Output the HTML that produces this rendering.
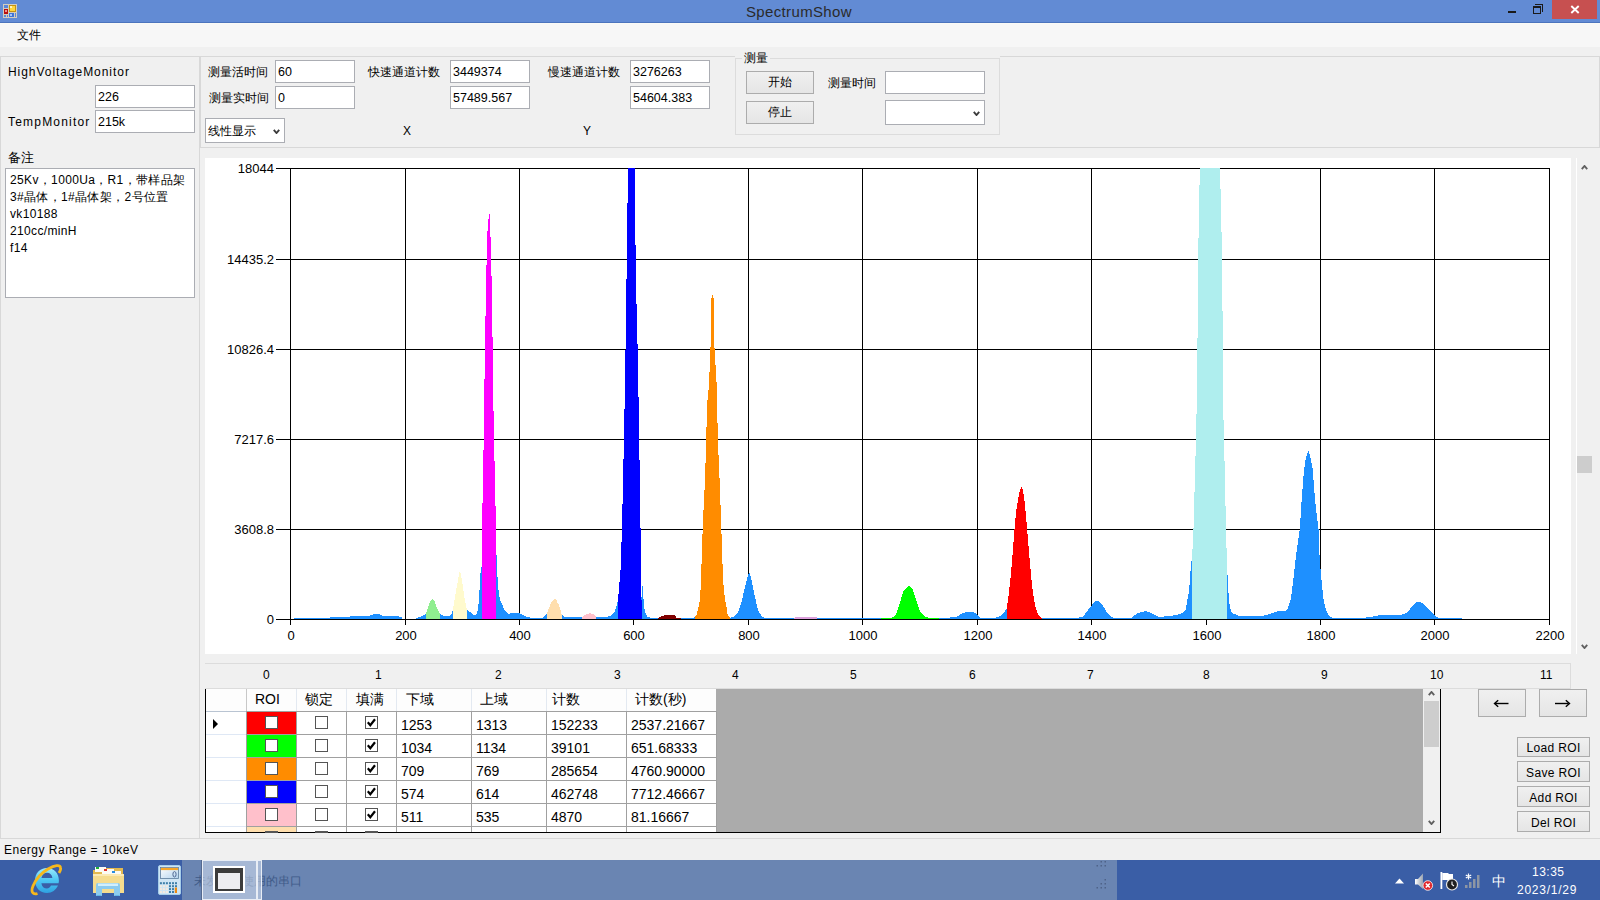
<!DOCTYPE html>
<html><head><meta charset="utf-8"><title>SpectrumShow</title>
<style>
*{box-sizing:border-box;margin:0;padding:0}
html,body{width:1600px;height:900px;overflow:hidden;background:#f0f0f0;font-family:"Liberation Sans",sans-serif;font-size:12px;color:#000;position:relative}
.a{position:absolute}
.l{position:absolute;white-space:nowrap;font-size:12px;line-height:14px}
.tb{position:absolute;background:#fff;border:1px solid #abadb3;height:23px;padding-left:2px;font-size:12.5px;line-height:23px;white-space:nowrap;overflow:hidden}
.btn{position:absolute;border:1px solid #acacac;background:linear-gradient(#f0f0f0,#e5e5e5);text-align:center;white-space:nowrap;font-size:12px}
.cb{position:absolute;background:#fff;border:1px solid #abadb3}
.chev{position:absolute;width:7px;height:7px;border-right:2px solid #444;border-bottom:2px solid #444;transform:rotate(45deg)}
.hn{position:absolute;top:668px;font-size:12px;line-height:14px;white-space:nowrap}
.gc{position:absolute;font-size:14px;line-height:16px;white-space:nowrap}
.ck{position:absolute;width:13px;height:13px;background:#fff;border:1px solid #555}
</style></head><body>

<!-- title bar -->
<div class="a" style="left:0;top:0;width:1600px;height:22px;background:#628bd4"></div>
<div class="a" style="left:0;top:22px;width:1600px;height:1px;background:#4c74bd"></div>
<svg class="a" style="left:3px;top:4px" width="14" height="14" viewBox="0 0 14 14" shape-rendering="crispEdges">
<rect x="0" y="0" width="14" height="14" fill="#d4cdbf"/>
<rect x="1" y="1" width="4" height="3" fill="#5a87d8"/>
<rect x="1" y="5" width="4" height="5" fill="#b81010"/><rect x="2" y="6" width="2" height="2" fill="#f09090"/>
<rect x="6" y="1" width="7" height="7" fill="#c39312"/><rect x="7" y="2" width="5" height="5" fill="#ffd640"/><rect x="7" y="2" width="2" height="2" fill="#fff3c0"/>
<rect x="6" y="9" width="5" height="4" fill="#3f74d8"/><rect x="7" y="10" width="2" height="2" fill="#a8c6fa"/>
<rect x="1" y="11" width="2" height="2" fill="#5a87d8"/><rect x="4" y="11" width="1" height="2" fill="#5a87d8"/>
<rect x="12" y="9" width="1" height="4" fill="#5a87d8"/>
</svg>
<div class="l" style="left:746px;top:3px;font-size:15px;line-height:17px;letter-spacing:0.35px;color:#2a2a2a">SpectrumShow</div>
<div class="a" style="left:1508px;top:11px;width:8px;height:2px;background:#1a1a1a"></div>
<div class="a" style="left:1535px;top:4px;width:8px;height:8px;border-top:1px solid #1a1a1a;border-right:1px solid #1a1a1a"></div>
<div class="a" style="left:1533px;top:6px;width:8px;height:8px;border:1px solid #1a1a1a;border-top-width:2px"></div>
<div class="a" style="left:1552px;top:0;width:45px;height:19px;background:#c75050"></div>
<svg class="a" style="left:1570px;top:5px" width="10" height="9" viewBox="0 0 10 9"><path d="M1.3 1 L8.7 8 M8.7 1 L1.3 8" stroke="#fff" stroke-width="1.9"/></svg>

<!-- menu bar -->
<div class="a" style="left:0;top:23px;width:1600px;height:24px;background:#f7f7f7"></div>
<div class="a" style="left:0;top:23px;width:1600px;height:1px;background:#fbfaf5"></div>
<div class="l" style="left:17px;top:28px;font-size:12px">文件</div>

<!-- left panel -->
<div class="a" style="left:0;top:56px;width:200px;height:783px;border:1px solid #d8d8d8"></div>
<div class="l" style="left:8px;top:65px;letter-spacing:0.95px">HighVoltageMonitor</div>
<div class="tb" style="left:95px;top:85px;width:100px">226</div>
<div class="l" style="left:8px;top:115px;letter-spacing:1.2px">TempMonitor</div>
<div class="tb" style="left:95px;top:110px;width:100px">215k</div>
<div class="l" style="left:8px;top:151px;font-size:13px">备注</div>
<div class="a" style="left:5px;top:168px;width:190px;height:130px;background:#fff;border:1px solid #abadb3"></div>
<div class="l" style="left:10px;top:172px;line-height:17px;letter-spacing:0.35px;white-space:pre">25Kv，1000Ua，R1，带样品架
3#晶体，1#晶体架，2号位置
vk10188
210cc/minH
f14</div>

<!-- top panel -->
<div class="a" style="left:200px;top:56px;width:1400px;height:92px;border:1px solid #d8d8d8"></div>
<div class="l" style="left:208px;top:65px">测量活时间</div>
<div class="tb" style="left:275px;top:60px;width:80px">60</div>
<div class="l" style="left:209px;top:91px">测量实时间</div>
<div class="tb" style="left:275px;top:86px;width:80px">0</div>
<div class="cb" style="left:205px;top:118px;width:80px;height:25px"></div>
<div class="l" style="left:208px;top:124px">线性显示</div>
<svg class="a" style="left:273px;top:128.5px" width="7" height="5" viewBox="0 0 7 5"><path d="M0.8 0.8 L3.5 4 L6.2 0.8" stroke="#3c3c3c" stroke-width="1.9" fill="none"/></svg>

<div class="l" style="left:368px;top:65px">快速通道计数</div>
<div class="tb" style="left:450px;top:60px;width:80px">3449374</div>
<div class="tb" style="left:450px;top:86px;width:80px">57489.567</div>
<div class="l" style="left:403px;top:124px">X</div>

<div class="l" style="left:548px;top:65px">慢速通道计数</div>
<div class="tb" style="left:630px;top:60px;width:80px">3276263</div>
<div class="tb" style="left:630px;top:86px;width:80px">54604.383</div>
<div class="l" style="left:583px;top:124px">Y</div>

<div class="a" style="left:735px;top:56px;width:265px;height:2px;background:#f0f0f0"></div>
<div class="a" style="left:735px;top:58px;width:265px;height:77px;border:1px solid #dcdcdc;background:#f0f0f0"></div>
<div class="l" style="left:742px;top:51px;background:#f0f0f0;padding:0 2px">测量</div>
<div class="btn" style="left:746px;top:71px;width:68px;height:23px;line-height:21px">开始</div>
<div class="btn" style="left:746px;top:101px;width:68px;height:23px;line-height:21px">停止</div>
<div class="l" style="left:828px;top:76px">测量时间</div>
<div class="cb" style="left:885px;top:71px;width:100px;height:23px"></div>
<div class="cb" style="left:885px;top:100px;width:100px;height:25px"></div>
<svg class="a" style="left:973px;top:110.5px" width="7" height="5" viewBox="0 0 7 5"><path d="M0.8 0.8 L3.5 4 L6.2 0.8" stroke="#3c3c3c" stroke-width="1.9" fill="none"/></svg>

<!-- chart -->
<svg class="a" style="left:0;top:0" width="1600" height="900" viewBox="0 0 1600 900" shape-rendering="crispEdges">
<rect x="205" y="158" width="1366" height="496" fill="#fff"/>
<rect x="405" y="168" width="1" height="451" fill="#000"/>
<rect x="519" y="168" width="1" height="451" fill="#000"/>
<rect x="633" y="168" width="1" height="451" fill="#000"/>
<rect x="748" y="168" width="1" height="451" fill="#000"/>
<rect x="862" y="168" width="1" height="451" fill="#000"/>
<rect x="977" y="168" width="1" height="451" fill="#000"/>
<rect x="1091" y="168" width="1" height="451" fill="#000"/>
<rect x="1206" y="168" width="1" height="451" fill="#000"/>
<rect x="1320" y="168" width="1" height="451" fill="#000"/>
<rect x="1434" y="168" width="1" height="451" fill="#000"/>
<rect x="290" y="259" width="1259" height="1" fill="#000"/>
<rect x="290" y="349" width="1259" height="1" fill="#000"/>
<rect x="290" y="439" width="1259" height="1" fill="#000"/>
<rect x="290" y="529" width="1259" height="1" fill="#000"/>
<rect x="290" y="168" width="1260" height="1" fill="#000"/>
<rect x="1549" y="168" width="1" height="451" fill="#000"/>
<polygon fill="#1E90FF" points="294,619 294,618 330,617.5 350,616.5 365,616 370,615.5 375,614 380,614.5 383,616 395,616 402,617 402,619"/>
<polygon fill="#1E90FF" points="416,619 416,618 420,617 424,615 426,613 428,608 430,602 432.5,598.5 435,602 437,608 440,614 443,615.5 449,616 452,613 453,609 455,597 458,580 460,570 462,580 464,595 466,605 467,610 470,612 474,615 477,614 478,608 479,600 480,580 481,567 481.9,567 482,527 483,480 484,420 485,340 486,292 487,239 488,224 489,214 490,214 491,258 492,292 493,380 494,440 495,480 496,530 496.1,543 497,570 498.6,591 500,600 502,604 504,609 506,612 508,614 510,613.5 514,613 519,613 523,615 527,617 530,617.5 543,617.5 545,615.5 547,613 549,608 551,603 553,600 555,599 557,601 558,604 559,605 561,612 562,615 563,616 565,617 572,616.5 580,617 582,617.5 585,615 590,613.3 594,614.5 596,617 600,617.5 605,617 610,616 613,614 615,611 617,605 618.2,598 620.5,570 622,528 623,480 624,438 625,380 626,320 627,240 628,168 634.7,168 635,204 636,285 637.3,334 638.3,380 639,438 640,480 640.5,528 641,570 641.5,600 641.6,576 643,592 644,606 645,612 647,616.5 650,617.5 658,618 660,617 664,615.5 670,615 675,615.5 676,617.5 681,618 693,618 695,616 697,614 698.2,608 700,600 701,580 702,548 703,520 704.5,490 706,450 707,405 709,385 710.5,348 711,300 712.7,294 714,300 714.5,348 716.7,385 717,405 718.3,450 720,490 721,520 722,548 723,580 725,600 726.7,608 727.5,614 730,618 735,616 738,612 740,607 742,600 744,591 746,583 748,575 749.5,573 751,578 753,587 755,597 757,606 759,612 762,616.5 765,618 794,618 795,617 816,617 817,618 881,618 891,618 893,617 895,615.5 897,612 899,606 901,599 903,592 905,589 907,587 909,586 911,587 913,590 915,596 916.5,601 918,606 920,611 922,614 925,616.5 928,617.5 939,618 950,617.5 955,617 958,616 960,614.5 963,613 966,612 972,612 975,613 977,614.5 979,616 980,617.5 995,618 997,617 1000,616 1003,614 1005,611 1006.7,609 1008,600 1010,583 1012,562 1014,535 1016,512 1018,500 1020,490 1021.5,486.5 1023,490 1025,505 1027,528 1029,552 1031,575 1033,593 1035,605 1037,612 1040,617 1041.6,618 1075,618 1082,617 1085,614 1088,610 1092,605 1095,601 1098,601 1102,604 1105,609 1108,614 1112,617 1114,618 1131,618 1135,615 1138,613 1141,612 1146,611 1150,612.5 1155,615 1158,616.5 1164,616.5 1170,616 1175,615 1180,614 1184,612 1186,609 1187,601 1189,592 1190,578 1191,564 1191.7,560 1192,560 1193.5,528 1196,438 1197,390 1197.9,300 1198.7,220 1199.9,168 1219.9,168 1221,205 1221.9,253 1222.7,328 1223,400 1224,438 1226,528 1226.9,563 1228,585 1229,600 1230,608 1232,613 1238,615.5 1250,616.5 1262,616 1270,614 1275,612 1280,610.5 1285,611 1288,608 1291,598 1293,582 1296,556 1299.8,529 1302,495 1304,470 1306,457 1308.4,451 1310,455 1312.8,470 1315,500 1318.6,530 1319.7,560 1322,585 1323.6,600 1326,610 1329,616 1333,618 1361,618 1371,617 1378,615.5 1385,615 1400,615 1406,613 1410,609 1415,603 1419,601.5 1422,603 1426,606 1430,611 1433,614 1437,617 1438,618 1462,618 1462,619"/>
<polygon fill="#90EE90" points="426,619 426,613 428,608 430,602 432.5,598.5 435,602 437,608 440,614 440,619"/>
<polygon fill="#FFFACD" points="453,619 453,609 455,597 458,580 460,570 462,580 464,595 466,605 467,610 467,619"/>
<polygon fill="#FF00FF" points="482,619 482,527 483,480 484,420 485,340 486,292 487,239 488,224 489,214 490,214 491,258 492,292 493,380 494,440 495,480 496,530 496,619"/>
<polygon fill="#FFDEAD" points="547,619 547,613 549,608 551,603 553,600 555,599 557,601 558,604 559,605 561,612 562,615 562,619"/>
<polygon fill="#FFC0CB" points="582,619 582,617.5 585,615 590,613.3 594,614.5 596,617 596,619"/>
<polygon fill="#0000FF" points="618.2,619 618.2,598 620.5,570 622,528 623,480 624,438 625,380 626,320 627,240 628,168 634.7,168 635,204 636,285 637.3,334 638.3,380 639,438 640,480 640.5,528 641,570 641.5,600 641.5,619"/>
<polygon fill="#800000" points="658,619 658,618 660,617 664,615.5 670,615 675,615.5 676,617.5 681,618 681,619"/>
<polygon fill="#FF8C00" points="695,619 695,616 697,614 698.2,608 700,600 701,580 702,548 703,520 704.5,490 706,450 707,405 709,385 710.5,348 711,300 712.7,294 714,300 714.5,348 716.7,385 717,405 718.3,450 720,490 721,520 722,548 723,580 725,600 726.7,608 727.5,614 730,618 730,619"/>
<polygon fill="#DDA0DD" points="794,619 794,618 795,617 816,617 817,618 817,619"/>
<polygon fill="#00FF00" points="881,619 881,618 891,618 893,617 895,615.5 897,612 899,606 901,599 903,592 905,589 907,587 909,586 911,587 913,590 915,596 916.5,601 918,606 920,611 922,614 925,616.5 928,617.5 939,618 939,619"/>
<polygon fill="#FF0000" points="1006.7,619 1006.7,609 1008,600 1010,583 1012,562 1014,535 1016,512 1018,500 1020,490 1021.5,486.5 1023,490 1025,505 1027,528 1029,552 1031,575 1033,593 1035,605 1037,612 1040,617 1041.6,618 1041.6,619"/>
<polygon fill="#AFEEEE" points="1191.7,619 1191.7,560 1192,560 1193.5,528 1196,438 1197,390 1197.9,300 1198.7,220 1199.9,168 1219.9,168 1221,205 1221.9,253 1222.7,328 1223,400 1224,438 1226,528 1226.9,563 1226.9,619"/>
<rect x="290" y="168" width="1" height="457" fill="#000"/>
<rect x="276" y="619" width="1274" height="1" fill="#000"/>
<rect x="276" y="168" width="14" height="1" fill="#000"/>
<rect x="276" y="259" width="14" height="1" fill="#000"/>
<rect x="276" y="349" width="14" height="1" fill="#000"/>
<rect x="276" y="439" width="14" height="1" fill="#000"/>
<rect x="276" y="529" width="14" height="1" fill="#000"/>
<rect x="405" y="619" width="1" height="6" fill="#000"/>
<rect x="519" y="619" width="1" height="6" fill="#000"/>
<rect x="633" y="619" width="1" height="6" fill="#000"/>
<rect x="748" y="619" width="1" height="6" fill="#000"/>
<rect x="862" y="619" width="1" height="6" fill="#000"/>
<rect x="977" y="619" width="1" height="6" fill="#000"/>
<rect x="1091" y="619" width="1" height="6" fill="#000"/>
<rect x="1206" y="619" width="1" height="6" fill="#000"/>
<rect x="1320" y="619" width="1" height="6" fill="#000"/>
<rect x="1434" y="619" width="1" height="6" fill="#000"/>
<rect x="1549" y="619" width="1" height="6" fill="#000"/>
<g font-family="Liberation Sans, sans-serif" font-size="13" fill="#000" shape-rendering="auto"><text x="274" y="172.6" text-anchor="end">18044</text>
<text x="274" y="263.6" text-anchor="end">14435.2</text>
<text x="274" y="353.6" text-anchor="end">10826.4</text>
<text x="274" y="443.6" text-anchor="end">7217.6</text>
<text x="274" y="533.6" text-anchor="end">3608.8</text>
<text x="274" y="623.6" text-anchor="end">0</text>
<text x="291" y="640" text-anchor="middle">0</text>
<text x="406" y="640" text-anchor="middle">200</text>
<text x="520" y="640" text-anchor="middle">400</text>
<text x="634" y="640" text-anchor="middle">600</text>
<text x="749" y="640" text-anchor="middle">800</text>
<text x="863" y="640" text-anchor="middle">1000</text>
<text x="978" y="640" text-anchor="middle">1200</text>
<text x="1092" y="640" text-anchor="middle">1400</text>
<text x="1207" y="640" text-anchor="middle">1600</text>
<text x="1321" y="640" text-anchor="middle">1800</text>
<text x="1435" y="640" text-anchor="middle">2000</text>
<text x="1550" y="640" text-anchor="middle">2200</text></g>
</svg>
<div class="a" style="left:1576px;top:158px;width:1px;height:496px;background:#fff"></div>
<svg class="a" style="left:1581px;top:164.5px" width="7" height="5" viewBox="0 0 7 5"><path d="M0.8 4.2 L3.5 1 L6.2 4.2" stroke="#606060" stroke-width="1.9" fill="none"/></svg>
<svg class="a" style="left:1581px;top:643.5px" width="7" height="5" viewBox="0 0 7 5"><path d="M0.8 0.8 L3.5 4 L6.2 0.8" stroke="#606060" stroke-width="1.9" fill="none"/></svg>
<div class="a" style="left:1577px;top:456px;width:15px;height:17px;background:#cdcdcd"></div>

<!-- header row numbers -->
<div class="a" style="left:205px;top:663px;width:1366px;height:26px;border-top:1px solid #dcdcdc;border-right:1px solid #dcdcdc"></div>
<div class="hn" style="left:263px">0</div>
<div class="hn" style="left:375px">1</div>
<div class="hn" style="left:495px">2</div>
<div class="hn" style="left:614px">3</div>
<div class="hn" style="left:732px">4</div>
<div class="hn" style="left:850px">5</div>
<div class="hn" style="left:969px">6</div>
<div class="hn" style="left:1087px">7</div>
<div class="hn" style="left:1203px">8</div>
<div class="hn" style="left:1321px">9</div>
<div class="hn" style="left:1430px">10</div>
<div class="hn" style="left:1540px">11</div>

<!-- data grid -->
<div class="a" style="left:205px;top:688px;width:1366px;height:1px;background:#dcdcdc"></div>
<div class="a" style="left:205px;top:689px;width:1236px;height:144px;background:#ababab;border-left:1px solid #000;border-right:1px solid #000;border-bottom:1px solid #000"></div>
<div class="a" style="left:206px;top:689px;width:510px;height:143px;background:#fff"></div>
<div class="a" style="left:206px;top:689px;width:510px;height:22px;background:#fdfdfd"></div>
<div class="a" style="left:246px;top:689px;width:1px;height:22px;background:#e3e9f1"></div>
<div class="a" style="left:296px;top:689px;width:1px;height:22px;background:#e3e9f1"></div>
<div class="a" style="left:346px;top:689px;width:1px;height:22px;background:#e3e9f1"></div>
<div class="a" style="left:396px;top:689px;width:1px;height:22px;background:#e3e9f1"></div>
<div class="a" style="left:471px;top:689px;width:1px;height:22px;background:#e3e9f1"></div>
<div class="a" style="left:546px;top:689px;width:1px;height:22px;background:#e3e9f1"></div>
<div class="a" style="left:626px;top:689px;width:1px;height:22px;background:#e3e9f1"></div>
<div class="a" style="left:246px;top:689px;width:1px;height:22px;background:#c8c8c8"></div>
<div class="a" style="left:246px;top:711px;width:470px;height:1px;background:#a0a0a0"></div>
<div class="a" style="left:206px;top:711px;width:40px;height:1px;background:#dfe8f5"></div>
<div class="a" style="left:246px;top:734px;width:470px;height:1px;background:#a0a0a0"></div>
<div class="a" style="left:206px;top:734px;width:40px;height:1px;background:#dfe8f5"></div>
<div class="a" style="left:246px;top:757px;width:470px;height:1px;background:#a0a0a0"></div>
<div class="a" style="left:206px;top:757px;width:40px;height:1px;background:#dfe8f5"></div>
<div class="a" style="left:246px;top:780px;width:470px;height:1px;background:#a0a0a0"></div>
<div class="a" style="left:206px;top:780px;width:40px;height:1px;background:#dfe8f5"></div>
<div class="a" style="left:246px;top:803px;width:470px;height:1px;background:#a0a0a0"></div>
<div class="a" style="left:206px;top:803px;width:40px;height:1px;background:#dfe8f5"></div>
<div class="a" style="left:246px;top:826px;width:470px;height:1px;background:#a0a0a0"></div>
<div class="a" style="left:206px;top:826px;width:40px;height:1px;background:#dfe8f5"></div>
<div class="a" style="left:206px;top:711px;width:40px;height:1px;background:#b9c4d2"></div>
<div class="a" style="left:246px;top:711px;width:1px;height:121px;background:#a0a0a0"></div>
<div class="a" style="left:296px;top:711px;width:1px;height:121px;background:#a0a0a0"></div>
<div class="a" style="left:346px;top:711px;width:1px;height:121px;background:#a0a0a0"></div>
<div class="a" style="left:396px;top:711px;width:1px;height:121px;background:#a0a0a0"></div>
<div class="a" style="left:471px;top:711px;width:1px;height:121px;background:#a0a0a0"></div>
<div class="a" style="left:546px;top:711px;width:1px;height:121px;background:#a0a0a0"></div>
<div class="a" style="left:626px;top:711px;width:1px;height:121px;background:#a0a0a0"></div>
<div class="a" style="left:716px;top:711px;width:1px;height:121px;background:#a0a0a0"></div>
<div class="a" style="left:247px;top:712px;width:49px;height:22px;background:#ff0000"></div>
<div class="a" style="left:247px;top:735px;width:49px;height:22px;background:#00ff00"></div>
<div class="a" style="left:247px;top:758px;width:49px;height:22px;background:#ff8c00"></div>
<div class="a" style="left:247px;top:781px;width:49px;height:22px;background:#0000ff"></div>
<div class="a" style="left:247px;top:804px;width:49px;height:22px;background:#ffc0cb"></div>
<div class="a" style="left:247px;top:827px;width:49px;height:5px;background:#ffdead"></div>
<div class="ck" style="left:265px;top:716px;height:13px"></div>
<div class="ck" style="left:315px;top:716px;height:13px"></div>
<div class="ck" style="left:365px;top:716px;height:13px"></div>
<svg class="a" style="left:365px;top:716px" width="13" height="13" viewBox="0 0 13 13"><path d="M2.8 6.3 L5.3 9.2 L10 3.3" fill="none" stroke="#000" stroke-width="2.2"/></svg>
<div class="ck" style="left:265px;top:739px;height:13px"></div>
<div class="ck" style="left:315px;top:739px;height:13px"></div>
<div class="ck" style="left:365px;top:739px;height:13px"></div>
<svg class="a" style="left:365px;top:739px" width="13" height="13" viewBox="0 0 13 13"><path d="M2.8 6.3 L5.3 9.2 L10 3.3" fill="none" stroke="#000" stroke-width="2.2"/></svg>
<div class="ck" style="left:265px;top:762px;height:13px"></div>
<div class="ck" style="left:315px;top:762px;height:13px"></div>
<div class="ck" style="left:365px;top:762px;height:13px"></div>
<svg class="a" style="left:365px;top:762px" width="13" height="13" viewBox="0 0 13 13"><path d="M2.8 6.3 L5.3 9.2 L10 3.3" fill="none" stroke="#000" stroke-width="2.2"/></svg>
<div class="ck" style="left:265px;top:785px;height:13px"></div>
<div class="ck" style="left:315px;top:785px;height:13px"></div>
<div class="ck" style="left:365px;top:785px;height:13px"></div>
<svg class="a" style="left:365px;top:785px" width="13" height="13" viewBox="0 0 13 13"><path d="M2.8 6.3 L5.3 9.2 L10 3.3" fill="none" stroke="#000" stroke-width="2.2"/></svg>
<div class="ck" style="left:265px;top:808px;height:13px"></div>
<div class="ck" style="left:315px;top:808px;height:13px"></div>
<div class="ck" style="left:365px;top:808px;height:13px"></div>
<svg class="a" style="left:365px;top:808px" width="13" height="13" viewBox="0 0 13 13"><path d="M2.8 6.3 L5.3 9.2 L10 3.3" fill="none" stroke="#000" stroke-width="2.2"/></svg>
<div class="ck" style="left:265px;top:831px;height:1px"></div>
<div class="ck" style="left:315px;top:831px;height:1px"></div>
<div class="ck" style="left:365px;top:831px;height:1px"></div>
<div class="gc" style="left:255px;top:691px">ROI</div>
<div class="gc" style="left:305px;top:691px">锁定</div>
<div class="gc" style="left:356px;top:691px">填满</div>
<div class="gc" style="left:406px;top:691px">下域</div>
<div class="gc" style="left:480px;top:691px">上域</div>
<div class="gc" style="left:552px;top:691px">计数</div>
<div class="gc" style="left:635px;top:691px">计数(秒)</div>
<div class="gc" style="left:401px;top:717px">1253</div>
<div class="gc" style="left:476px;top:717px">1313</div>
<div class="gc" style="left:551px;top:717px">152233</div>
<div class="gc" style="left:631px;top:717px">2537.21667</div>
<div class="gc" style="left:401px;top:740px">1034</div>
<div class="gc" style="left:476px;top:740px">1134</div>
<div class="gc" style="left:551px;top:740px">39101</div>
<div class="gc" style="left:631px;top:740px">651.68333</div>
<div class="gc" style="left:401px;top:763px">709</div>
<div class="gc" style="left:476px;top:763px">769</div>
<div class="gc" style="left:551px;top:763px">285654</div>
<div class="gc" style="left:631px;top:763px">4760.90000</div>
<div class="gc" style="left:401px;top:786px">574</div>
<div class="gc" style="left:476px;top:786px">614</div>
<div class="gc" style="left:551px;top:786px">462748</div>
<div class="gc" style="left:631px;top:786px">7712.46667</div>
<div class="gc" style="left:401px;top:809px">511</div>
<div class="gc" style="left:476px;top:809px">535</div>
<div class="gc" style="left:551px;top:809px">4870</div>
<div class="gc" style="left:631px;top:809px">81.16667</div>
<svg class="a" style="left:213px;top:719px" width="6" height="10" viewBox="0 0 6 10"><path d="M0 0 L5 5 L0 10Z" fill="#000"/></svg>

<!-- grid scrollbar -->
<div class="a" style="left:1423px;top:689px;width:17px;height:143px;background:#f0f0f0"></div>
<div class="a" style="left:1424px;top:701px;width:15px;height:46px;background:#cdcdcd"></div>
<svg class="a" style="left:1428px;top:691px" width="7" height="5" viewBox="0 0 7 5"><path d="M0.8 4.2 L3.5 1 L6.2 4.2" stroke="#606060" stroke-width="1.9" fill="none"/></svg>
<svg class="a" style="left:1428px;top:820px" width="7" height="5" viewBox="0 0 7 5"><path d="M0.8 0.8 L3.5 4 L6.2 0.8" stroke="#606060" stroke-width="1.9" fill="none"/></svg>

<!-- right buttons -->
<div class="btn" style="left:1478px;top:689px;width:48px;height:28px"></div>
<svg class="a" style="left:1493px;top:699px" width="17" height="9" viewBox="0 0 17 9"><path d="M2 4.5 H15.5" stroke="#000" stroke-width="1.4"/><path d="M5.2 1.2 L1.5 4.5 L5.2 7.8" stroke="#000" stroke-width="1.4" fill="none"/></svg>
<div class="btn" style="left:1539px;top:689px;width:48px;height:28px"></div>
<svg class="a" style="left:1554px;top:699px" width="17" height="9" viewBox="0 0 17 9"><path d="M1 4.5 H14.5" stroke="#000" stroke-width="1.4"/><path d="M11.8 1.2 L15.5 4.5 L11.8 7.8" stroke="#000" stroke-width="1.4" fill="none"/></svg>
<div class="btn" style="left:1517px;top:737px;width:73px;height:20px;line-height:18px;letter-spacing:0.35px;padding-top:1px">Load ROI</div>
<div class="btn" style="left:1517px;top:761px;width:73px;height:21px;line-height:21px;letter-spacing:0.35px;padding-top:1px">Save ROI</div>
<div class="btn" style="left:1517px;top:786px;width:73px;height:21px;line-height:21px;letter-spacing:0.35px;padding-top:1px">Add ROI</div>
<div class="btn" style="left:1517px;top:811px;width:73px;height:21px;line-height:21px;letter-spacing:0.35px;padding-top:1px">Del ROI</div>

<!-- bottom border + status -->
<div class="a" style="left:0;top:838px;width:1600px;height:1px;background:#d8d8d8"></div>
<div class="l" style="left:4px;top:843px;letter-spacing:0.5px">Energy Range = 10keV</div>

<!-- taskbar -->

<div class="a" style="left:0;top:860px;width:1600px;height:40px;background:#3a5ea6"></div>
<div class="a" style="left:182px;top:860px;width:935px;height:40px;background:#6a85b2"></div>
<svg class="a" style="left:1090px;top:860px" width="20" height="32" viewBox="0 0 20 32" fill="#4e6388"><rect x="10.5" y="1" width="1.5" height="1.5"/><rect x="14.5" y="1" width="1.5" height="1.5"/><rect x="6.5" y="5" width="1.5" height="1.5"/><rect x="10.5" y="5" width="1.5" height="1.5"/><rect x="14.5" y="5" width="1.5" height="1.5"/><rect x="14.5" y="19" width="1.5" height="1.5"/><rect x="10.5" y="23" width="1.5" height="1.5"/><rect x="14.5" y="23" width="1.5" height="1.5"/><rect x="6.5" y="27" width="1.5" height="1.5"/><rect x="10.5" y="27" width="1.5" height="1.5"/><rect x="14.5" y="27" width="1.5" height="1.5"/></svg>
<div class="l" style="left:194px;top:874px;font-size:12px;color:#3f5a88">未发现可使用的串口</div>
<div class="a" style="left:202px;top:860px;width:55px;height:40px;background:rgba(215,225,242,0.55);border:1px solid #e8edf5;box-shadow:-1px 0 0 0 #55698f"></div>
<div class="a" style="left:257px;top:860px;width:5px;height:40px;background:rgba(215,225,242,0.55);border:1px solid #e8edf5"></div>
<div class="a" style="left:213px;top:866px;width:32px;height:27px;background:#fff"></div>
<div class="a" style="left:215px;top:868px;width:28px;height:23px;background:#3c3c3c"></div>
<div class="a" style="left:218px;top:873px;width:22px;height:16px;background:#ededf0"></div>
<svg class="a" style="left:28px;top:862px" width="34" height="34" viewBox="0 0 34 34">
<defs><linearGradient id="ieg" x1="0" y1="0" x2="0" y2="1"><stop offset="0" stop-color="#9aeafc"/><stop offset="0.5" stop-color="#4cc6f4"/><stop offset="1" stop-color="#2fa2e2"/></linearGradient></defs>
<path d="M19 6 C12 6 7 11 7 18.5 C7 25.5 12 31 19 31 C24 31 28 28 30 23.5 H23 C22 25.5 20.5 26.5 19 26.5 C16 26.5 13.8 24.5 13.4 21.2 H30.6 C30.8 20.3 30.9 19.4 30.9 18.5 C30.9 11 26 6 19 6 Z M13.5 16 C14 12.8 16 10.8 19 10.8 C22 10.8 24 12.8 24.4 16 Z" fill="url(#ieg)"/>
<path d="M9.5 31.5 C5 33 2.5 30 5 24 C8 17 13 11 20 7 C27 3 32 2.5 32.5 5.5 C33 7.5 32 9.5 31 11" stroke="#f6b81c" stroke-width="2.8" fill="none"/>
</svg>
<svg class="a" style="left:92px;top:865px" width="33" height="31" viewBox="0 0 33 31">
<path d="M1 5 H11 L13 3 H31 V27 H1 Z" fill="#e3b94f"/>
<rect x="3" y="2" width="11" height="5" fill="#fbfbf5"/><rect x="4" y="2" width="3" height="2" fill="#1fae3a"/>
<rect x="10" y="4" width="12" height="5" fill="#fbfbf5"/><rect x="12" y="4" width="3" height="2" fill="#e0342a"/>
<rect x="18" y="6" width="11" height="4" fill="#fbfbf5"/><rect x="20" y="6" width="3" height="2" fill="#2a8ee0"/>
<path d="M1 9 H32 V28 H1 Z" fill="#f5dc8e"/>
<path d="M1 9 H32 V11 H1 Z" fill="#fbeab5"/>
<path d="M4 31 V20 Q4 18 6 18 H26 Q28 18 28 20 V31 H22 V24 H10 V31 Z" fill="#8ccbee"/>
<path d="M6 18.5 H26 V21 H6 Z" fill="#d2effc"/><path d="M4.5 30.5 H9.5 V31 H4.5Z M22.5 30.5 H27.5 V31 H22.5Z" fill="#3aa0e0"/>
</svg>
<svg class="a" style="left:158px;top:865px" width="23" height="30" viewBox="0 0 23 30">
<defs><linearGradient id="cdisp" x1="0" y1="0" x2="1" y2="1"><stop offset="0" stop-color="#ffffff"/><stop offset="1" stop-color="#b4d4ee"/></linearGradient></defs>
<rect x="0.5" y="0.5" width="22" height="29" rx="1.5" fill="#cfe5f4" stroke="#a6cde8"/>
<rect x="2.5" y="2.5" width="18" height="11" fill="url(#cdisp)" stroke="#5d7d9c" stroke-width="0.8"/>
<rect x="2.9" y="2.9" width="17.2" height="2.2" fill="#f5a52a"/>
<ellipse cx="16.5" cy="9.3" rx="1.6" ry="2.7" fill="none" stroke="#4f6690" stroke-width="1"/>
<rect x="1.9" y="17.2" width="2" height="2" fill="#3f7fa8"/><rect x="4.9" y="17.2" width="2" height="2" fill="#3f7fa8"/><rect x="7.9" y="17.2" width="2" height="2" fill="#3f7fa8"/><rect x="11" y="17.2" width="2" height="2" fill="#3f7fa8"/><rect x="14" y="17.2" width="2" height="2" fill="#3f7fa8"/><rect x="17" y="17.2" width="2" height="2" fill="#3f7fa8"/><rect x="1.9" y="20.2" width="2" height="2" fill="#f4eadf"/><rect x="4.9" y="20.2" width="2" height="2" fill="#f4eadf"/><rect x="7.9" y="20.2" width="2" height="2" fill="#f4eadf"/><rect x="11" y="20.2" width="2" height="2" fill="#3f7fa8"/><rect x="14" y="20.2" width="2" height="2" fill="#3f7fa8"/><rect x="17" y="20.2" width="2" height="2" fill="#3f7fa8"/><rect x="1.9" y="23.1" width="2" height="2" fill="#f4eadf"/><rect x="4.9" y="23.1" width="2" height="2" fill="#f4eadf"/><rect x="7.9" y="23.1" width="2" height="2" fill="#f4eadf"/><rect x="11" y="23.1" width="2" height="2" fill="#3f7fa8"/><rect x="14" y="23.1" width="2" height="2" fill="#3f7fa8"/><rect x="1.9" y="26" width="2" height="2" fill="#f4eadf"/><rect x="4.9" y="26" width="2" height="2" fill="#f4eadf"/><rect x="7.9" y="26" width="2" height="2" fill="#f4eadf"/><rect x="11" y="26" width="2" height="2" fill="#3f7fa8"/><rect x="14" y="26" width="2" height="2" fill="#3f7fa8"/>
<rect x="16.8" y="22.5" width="2.2" height="5.5" fill="#f08a10"/>
</svg>
<svg class="a" style="left:1395px;top:878px" width="9" height="6" viewBox="0 0 9 6"><path d="M0 5.5 L4.5 0.5 L9 5.5Z" fill="#fff"/></svg>
<svg class="a" style="left:1414px;top:872px" width="20" height="20" viewBox="0 0 20 20">
<defs><linearGradient id="spk" x1="0" y1="0" x2="1" y2="0"><stop offset="0" stop-color="#ffffff"/><stop offset="1" stop-color="#9aa3b0"/></linearGradient></defs>
<path d="M1 7 H4 L9 1.5 V17 L4 12.5 H1Z" fill="url(#spk)"/>
<circle cx="13.8" cy="13.5" r="4.8" fill="#e0252a" stroke="#fff" stroke-width="0.8"/><path d="M11.8 11.5 L15.8 15.5 M15.8 11.5 L11.8 15.5" stroke="#fff" stroke-width="1.6"/>
</svg>
<svg class="a" style="left:1440px;top:872px" width="22" height="20" viewBox="0 0 22 20">
<rect x="0.5" y="0" width="1.8" height="17" fill="#fff"/>
<path d="M2.3 1 H8 L9 2 H13 V9 H8 L7 8 H2.3Z" fill="#fff"/>
<circle cx="12" cy="12.5" r="5.5" fill="#202020" stroke="#e8e8e8" stroke-width="1.2"/>
<path d="M12 9.5 V12.5 L14 14" stroke="#fff" stroke-width="1.1" fill="none"/>
</svg>
<svg class="a" style="left:1464px;top:873px" width="18" height="16" viewBox="0 0 18 16">
<g fill="#8d96a4"><rect x="1" y="12" width="2.5" height="3"/><rect x="5" y="9" width="2.5" height="6"/><rect x="9" y="6" width="2.5" height="9"/><rect x="13" y="2" width="2.5" height="13"/></g>
<path d="M4.5 0.5 V6.5 M1.8 2 L7.2 5 M7.2 2 L1.8 5" stroke="#fff" stroke-width="1.2"/>
</svg>
<div class="l" style="left:1492px;top:873px;font-size:14px;line-height:16px;color:#fff">中</div>
<div class="l" style="left:1532px;top:865px;font-size:12px;color:#fff;letter-spacing:0.5px">13:35</div>
<div class="l" style="left:1517px;top:883px;font-size:12px;color:#fff;letter-spacing:0.75px">2023/1/29</div>

</body></html>
